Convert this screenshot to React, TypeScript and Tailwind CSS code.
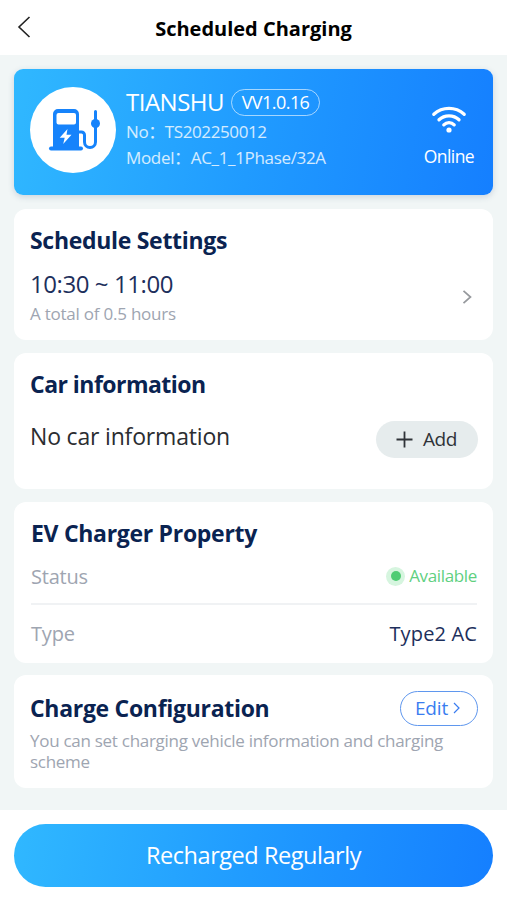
import React from 'react';

interface CardProps {
  className: string;
  children: React.ReactNode;
}

const Card = ({ className, children }: CardProps) => (
  <section className={`bg-white rounded-[12px] ${className}`}>{children}</section>
);

const ChargerIcon = () => (
  <svg width="86" height="86" viewBox="0 0 86 86" fill="none" className="shrink-0">
    <circle cx="43" cy="43" r="43" fill="#fff" />
    <path
      fillRule="evenodd"
      d="M23 61V27a5 5 0 0 1 5-5h16a5 5 0 0 1 5 5v34zM28.500 26h15.500a2 2 0 0 1 2 2v7.500a2 2 0 0 1-2 2H28.500a2 2 0 0 1-2-2V28a2 2 0 0 1 2-2z"
      fill="#1683fb"
    />
    <path d="M37.500 42l-7.800 8.800h5l-1.500 6.200 8.300-9.300h-5z" fill="#fff" />
    <path d="M21 61.500h30" stroke="#1683fb" strokeWidth="4" strokeLinecap="round" />
    <path
      d="M49 45h2.500a3 3 0 0 1 3 3v7a5.500 5.500 0 0 0 11 0V24.500"
      stroke="#1683fb"
      strokeWidth="3"
      strokeLinecap="round"
    />
    <circle cx="65.500" cy="36.500" r="4.500" fill="#1683fb" />
  </svg>
);

const WifiIcon = () => (
  <svg width="36" height="28" viewBox="0 0 36 28" fill="none" stroke="#fff" strokeWidth="3.300" strokeLinecap="round">
    <path d="M2.800 8.300C11.500 0.500 24.500 0.500 33.200 8.300" />
    <path d="M8 13.800C13.500 8.500 22.500 8.500 28 13.800" />
    <path d="M12.800 18.800C15.700 15.800 20.300 15.800 23.200 18.800" />
    <circle cx="18" cy="24" r="2.600" fill="#fff" stroke="none" />
  </svg>
);

const App = () => {
  return (
    <div className="w-[507px] h-[900px] flex flex-col overflow-hidden bg-[#f1f6f6] font-['Open_Sans','Noto_Sans_CJK_SC',sans-serif] whitespace-nowrap">
      <header className="h-[55px] shrink-0 bg-white flex items-center pl-[17px] pr-[31px]">
        <svg width="14" height="22" viewBox="0 0 14 22" fill="none" stroke="#222" strokeWidth="1.600" className="shrink-0 -mt-[2px]">
          <path d="M12.500 1L2 11l10.500 10" />
        </svg>
        <h1 className="flex-1 text-center text-[20px] leading-[30px] pt-[2px] font-bold text-black">
          Scheduled Charging
        </h1>
      </header>

      <main className="flex-1 flex flex-col px-[14px] pt-[14px]">
        <section className="h-[126px] rounded-[9px] bg-[linear-gradient(100deg,#30b8ff,#209bff_50%,#157fff)] shadow-[0_2px_6px_rgba(60,80,120,0.2)] flex pl-4 pr-[19px] text-white">
          <div className="pt-[18px]">
            <ChargerIcon />
          </div>
          <div className="flex-1 pl-[10px] pt-[19px]">
            <div className="flex items-center gap-[7px] h-[28px]">
              <span className="text-[24px] leading-[28px] tracking-[-0.5px]">TIANSHU</span>
              <span className="h-[27px] w-[89px] rounded-full border border-white/60 flex items-center justify-center text-[18px] leading-[24px] tracking-[-0.55px]">
                VV1.0.16
              </span>
            </div>
            <p className="mt-[3px] text-[17px] leading-[26px] tracking-[-0.4px] text-white/80">
              No：TS202250012
            </p>
            <p className="text-[17px] leading-[26px] tracking-[-0.33px] text-white/80">
              Model：AC_1_1Phase/32A
            </p>
          </div>
          <div className="flex flex-col items-center pt-[37px]">
            <WifiIcon />
            <span className="mt-[10px] text-[17.5px] leading-[24px] tracking-[-0.6px]">Online</span>
          </div>
        </section>

        <Card className="mt-[14px] h-[131px] pl-4 pr-[21px] pt-[15px]">
          <h2 className="text-[23px] leading-[32px] font-bold tracking-[-0.3px] text-[#0a2351]">
            Schedule Settings
          </h2>
          <div className="flex justify-between items-center mt-[11px]">
            <div>
              <p className="text-[24px] leading-[34px] tracking-[-0.43px] text-[#1d2f5c]">
                10:30 ~ 11:00
              </p>
              <p className="mt-px text-[17px] leading-[24px] tracking-[-0.23px] text-[#9ea5b1]">
                A total of 0.5 hours
              </p>
            </div>
            <svg width="10" height="16" viewBox="0 0 10 16" fill="none" stroke="#96999d" strokeWidth="1.700">
              <path d="M1.500 1.800L8.500 8l-7 6.200" />
            </svg>
          </div>
        </Card>

        <Card className="mt-[13px] h-[136px] pl-4 pr-[15px] pt-[15px]">
          <h2 className="text-[23px] leading-[32px] font-bold tracking-[-0.53px] text-[#0a2351]">
            Car information
          </h2>
          <div className="flex justify-between items-start mt-[20px]">
            <p className="text-[23px] leading-[32px] tracking-[-0.18px] text-[#2b2d31]">
              No car information
            </p>
            <button className="mt-px w-[102px] h-[37px] rounded-full bg-[#e6eced] flex items-center pl-[20px] gap-[10px] text-[19px] text-[#2f3338]">
              <svg width="17" height="17" viewBox="0 0 17 17" stroke="#2f3338" strokeWidth="1.800">
                <path d="M8.500 0.500v16M0.500 8.500h16" />
              </svg>
              <span className="tracking-[-0.5px]">Add</span>
            </button>
          </div>
        </Card>

        <Card className="mt-[13px] h-[161px] pl-[17px] pr-4 pt-[15px]">
          <h2 className="text-[23px] leading-[32px] font-bold tracking-[-0.3px] text-[#0a2351]">
            EV Charger Property
          </h2>
          <div className="h-[56px] pt-[2px] flex justify-between items-center border-b-2 border-[#f0f2f4]">
            <span className="text-[20px] tracking-[-0.2px] text-[#9ea5b1]">Status</span>
            <span className="-mt-[2px] flex items-center gap-[4px] text-[#5fd07f]">
              <span className="size-[19px] rounded-full bg-[#d6f5df] flex items-center justify-center">
                <span className="size-[10px] rounded-full bg-[#4fcc74]" />
              </span>
              <span className="text-[17px] tracking-[-0.35px]">Available</span>
            </span>
          </div>
          <div className="h-[58px] flex justify-between items-center">
            <span className="text-[20px] tracking-[-0.2px] text-[#9ea5b1]">Type</span>
            <span className="text-[20px] tracking-[0.15px] text-[#1d2f5c]">Type2 AC</span>
          </div>
        </Card>

        <Card className="mt-[12px] h-[113px] pl-4 pr-[15px] pt-[16px]">
          <div className="h-[35px] flex justify-between items-center">
            <h2 className="text-[23px] leading-[32px] -mt-[2px] font-bold tracking-[-0.3px] text-[#0a2351]">
              Charge Configuration
            </h2>
            <button className="w-[78px] h-[35px] rounded-full border border-[#5f97ee] flex items-center justify-center gap-[5px] pr-[3px] text-[19px] text-[#3a7df0]">
              <span className="tracking-[-0.2px]">Edit</span>
              <svg width="7" height="12" viewBox="0 0 7 12" fill="none" stroke="#3a7df0" strokeWidth="1.200" className="-mt-[2px]">
                <path d="M1 1l5 5-5 5" />
              </svg>
            </button>
          </div>
          <p className="mt-[4px] text-[17px] leading-[21px] tracking-[-0.28px] text-[#9ea5b1]">
            You can set charging vehicle information and charging
            <br />
            scheme
          </p>
        </Card>
      </main>

      <footer className="h-[90px] shrink-0 bg-white px-[14px] pt-[14px]">
        <button className="w-full h-[63px] rounded-full bg-[linear-gradient(100deg,#30b8ff,#209bff_50%,#157fff)] text-white text-[23.5px] tracking-[-0.45px]">
          Recharged Regularly
        </button>
      </footer>
    </div>
  );
};

export default App;
